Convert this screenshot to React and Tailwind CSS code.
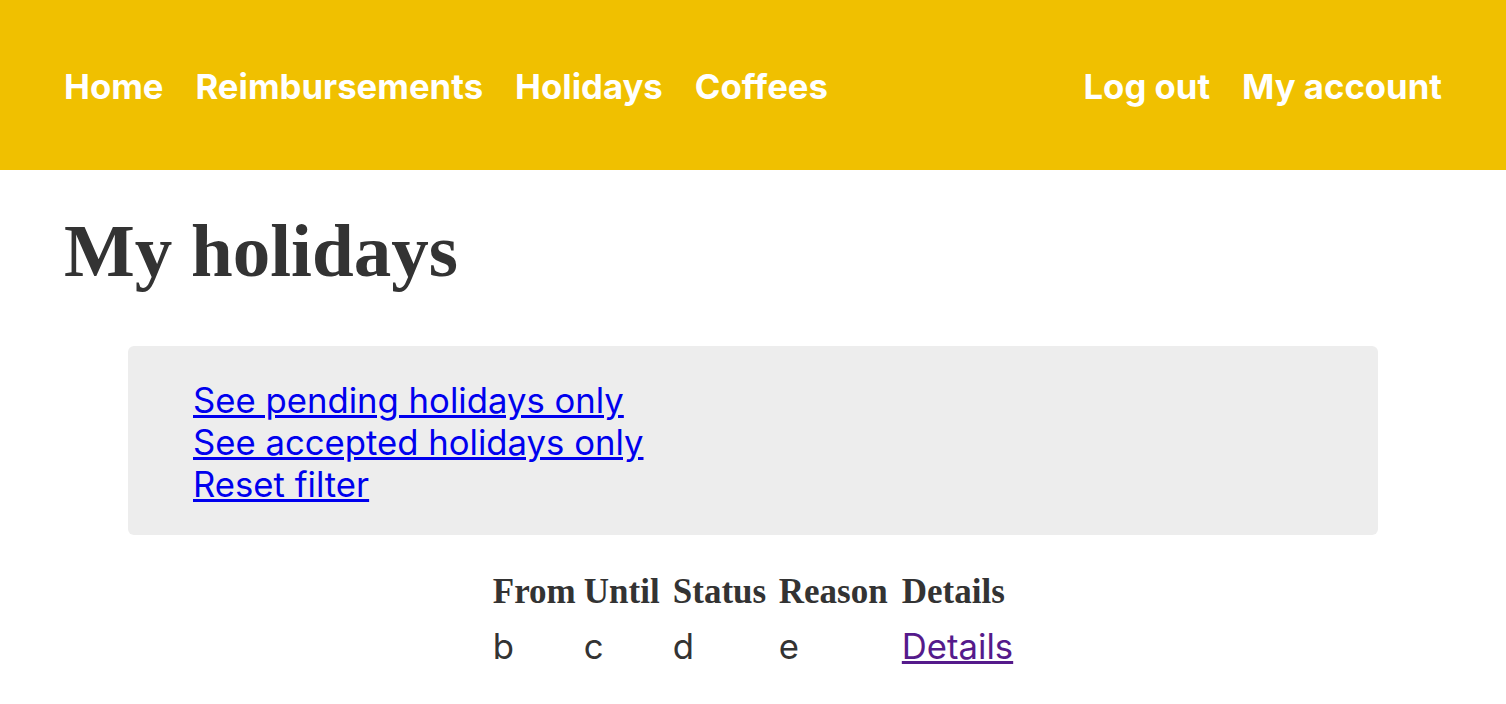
export default function App() {
  const serif = { fontFamily: '"Liberation Serif", serif' };
  return (
    <div className="min-h-screen bg-white text-[#333]" style={{ fontFamily: 'Inter, sans-serif' }}>
      <header className="bg-[#f0c000] h-[170px] px-16 flex items-center justify-between">
        <nav className="flex gap-[32px] text-[34.7px] font-bold text-white pt-[2px]">
          <a href="#">Home</a>
          <a href="#">Reimbursements</a>
          <a href="#">Holidays</a>
          <a href="#">Coffees</a>
        </nav>
        <nav className="flex gap-[32px] text-[34.7px] font-bold text-white pt-[2px]">
          <a href="#">Log out</a>
          <a href="#">My account</a>
        </nav>
      </header>

      <main className="px-16">
        <h1 className="text-[75px] font-bold leading-none pt-[43px] pb-[58px]" style={serif}>
          My holidays
        </h1>

        <div className="mx-16 bg-[#ededed] rounded-md pl-[65px] pt-[33px] pb-[30px] text-[34.7px] leading-[42px] flex flex-col items-start">
          <a href="#" className="text-[#0000ee] underline">See pending holidays only</a>
          <a href="#" className="text-[#0000ee] underline">See accepted holidays only</a>
          <a href="#" className="text-[#0000ee] underline">Reset filter</a>
        </div>

        <table className="mx-auto mt-[36px] border-separate border-spacing-x-[8px] border-spacing-y-0">
          <thead>
            <tr className="text-[35px] leading-[42px]" style={serif}>
              <th className="text-left font-bold whitespace-nowrap w-[83px]">From</th>
              <th className="text-left font-bold whitespace-nowrap w-[81px]">Until</th>
              <th className="text-left font-bold whitespace-nowrap w-[98px]">Status</th>
              <th className="text-left font-bold whitespace-nowrap w-[115px]">Reason</th>
              <th className="text-left font-bold whitespace-nowrap w-[111px]">Details</th>
            </tr>
          </thead>
          <tbody>
            <tr className="text-[34.7px] leading-[42px]">
              <td className="pt-[12px]">b</td>
              <td className="pt-[12px]">c</td>
              <td className="pt-[12px]">d</td>
              <td className="pt-[12px]">e</td>
              <td className="pt-[12px]">
                <a href="#" className="text-[#551a8b] underline">Details</a>
              </td>
            </tr>
          </tbody>
        </table>
      </main>
    </div>
  );
}
